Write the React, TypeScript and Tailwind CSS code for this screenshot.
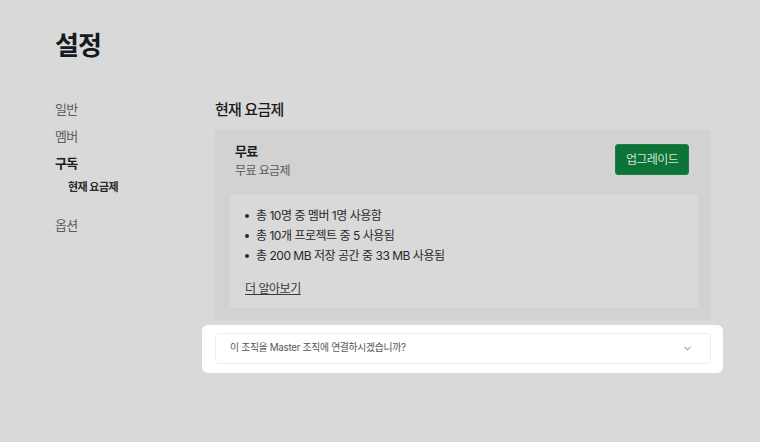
import { ChevronDown } from "lucide-react";

const NAV = [
  { label: "일반", active: false },
  { label: "멤버", active: false },
  { label: "구독", active: true },
];

const USAGE = [
  "총 10명 중 멤버 1명 사용함",
  "총 10개 프로젝트 중 5 사용됨",
  "총 200 MB 저장 공간 중 33 MB 사용됨",
];

export default function App() {
  return (
    <div
      className="h-[442px] w-[760px] overflow-hidden bg-[#d9d9d9] pl-[55px] pt-[28px] text-[#1c1c1c]"
      style={{ fontFamily: '"Inter", "Noto Sans CJK KR", sans-serif' }}
    >
      <h1 className="text-[26px] font-bold leading-[36px] tracking-[-0.04em] text-[#161a1d]">설정</h1>

      <div className="mt-[33px] flex">
        {/* sidebar */}
        <nav className="-mt-[1px] w-[160px] shrink-0">
          <ul className="flex flex-col">
            {NAV.map((item) => (
              <li
                key={item.label}
                className={`h-[27px] text-[13px] leading-[27px] tracking-[-0.06em] ${
                  item.active ? "font-semibold text-[#1c1c1c]" : "text-[#5c5c5c]"
                }`}
              >
                {item.label}
              </li>
            ))}
            <li className="h-[20px] pl-[13px] text-[11px] font-semibold leading-[20px] tracking-[-0.05em] text-[#2a2a2a]">
              현재 요금제
            </li>
            <li className="mt-[15px] h-[27px] text-[13px] leading-[27px] tracking-[-0.06em] text-[#5c5c5c]">옵션</li>
          </ul>
        </nav>

        {/* main */}
        <main className="w-[496px] shrink-0">
          <h2 className="h-[26px] text-[15px] font-medium leading-[25px] tracking-[-0.05em] text-[#1c1c1c]">현재 요금제</h2>

          <section className="mt-[7px] bg-[#d2d2d2] pb-[12px] pt-[12px]">
            <div className="flex items-start justify-between pl-[20px] pr-[22px]">
              <div>
                <div className="h-[19px] text-[13px] font-bold leading-[18px] tracking-[-0.05em] text-[#1c1c1c]">무료</div>
                <div className="h-[20px] text-[12px] leading-[20px] tracking-[-0.05em] text-[#5a5a5a]">무료 요금제</div>
              </div>
              <button
                type="button"
                className="mt-[2px] h-[31px] w-[74px] rounded-[3px] border border-[#1f7f47] bg-[#0b7436] text-[12px] tracking-[-0.05em] text-[#d5e3d9]"
              >
                업그레이드
              </button>
            </div>

            <div className="ml-[15px] mr-[13px] mt-[14px] rounded-[4px] bg-[#d9d9d9] pb-[10px] pl-[15px] pt-[11px]">
              <ul className="flex flex-col">
                {USAGE.map((u) => (
                  <li
                    key={u}
                    className="flex h-[20px] items-center text-[12px] leading-[20px] tracking-[-0.04em] text-[#2a2a2a]"
                  >
                    <span className="mr-[7px] inline-block h-[4px] w-[4px] shrink-0 rounded-full bg-[#2a2a2a]" />
                    {u}
                  </li>
                ))}
              </ul>
              <a className="mt-[14px] block h-[18px] w-fit text-[12px] leading-[18px] tracking-[-0.04em] text-[#3a3a3a] underline">
                더 알아보기
              </a>
            </div>
          </section>

          <div className="-ml-[13px] -mr-[12px] mt-[5px] rounded-[6px] bg-white pb-[9px] pl-[13px] pr-[12px] pt-[8px]">
            <div className="flex h-[31px] items-center justify-between rounded-[4px] border border-[#ededed] pl-[14px] pr-[17px]">
              <span className="text-[9.8px] tracking-[-0.03em] text-[#555]">이 조직을 Master 조직에 연결하시겠습니까?</span>
              <ChevronDown size={11} strokeWidth={2} className="text-[#666]" />
            </div>
          </div>
        </main>
      </div>
    </div>
  );
}
